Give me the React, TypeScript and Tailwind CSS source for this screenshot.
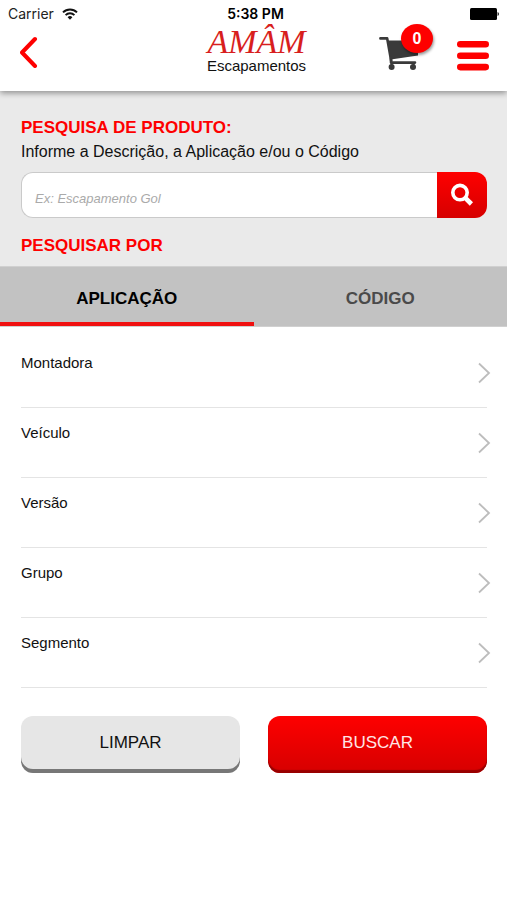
import { useState } from "react";

const TABS = ["APLICAÇÃO", "CÓDIGO"];

const FILTERS = ["Montadora", "Veículo", "Versão", "Grupo", "Segmento"];

function StatusBar() {
  return (
    <div className="grid h-7 grid-cols-3 items-center px-2 font-['Inter',sans-serif] text-sm leading-5 text-[#222]">
      <div className="flex items-center gap-2">
        <span>Carrier</span>
        <svg width="16" height="12" viewBox="0 0 16 12" fill="none" stroke="#111" strokeWidth="2">
          <path d="M1 4.4a10 10 0 0 1 14 0" />
          <path d="M3.6 7.1a6.3 6.3 0 0 1 8.8 0" />
          <path d="M8 11.8 5.6 9.2a3.4 3.4 0 0 1 4.8 0z" fill="#111" stroke="none" />
        </svg>
      </div>
      <span className="pl-1 text-center font-semibold text-black">5:38 PM</span>
      <svg className="ml-auto" width="30" height="12" viewBox="0 0 30 12" fill="#000">
        <rect x="1" width="27" height="12" rx="1.5" />
        <path d="M28.6 4a2.2 2.2 0 0 1 0 4z" />
      </svg>
    </div>
  );
}

function CartIcon() {
  return (
    <svg width="40" height="36" viewBox="0 0 40 36" fill="none">
      <path d="M1.4 2.4h6.8l4 22.6" stroke="#3a3a3a" strokeWidth="2.6" strokeLinecap="round" strokeLinejoin="round" />
      <path d="M8.6 4.6H39v14.8L11.8 23.4z" fill="#3a3a3a" />
      <path d="M12 22v4.6h24" stroke="#3a3a3a" strokeWidth="2.6" strokeLinecap="round" strokeLinejoin="round" />
      <path d="M12.6 27v4M34.6 27v4" stroke="#3a3a3a" strokeWidth="2" />
      <circle cx="12.6" cy="31" r="3" fill="#3a3a3a" />
      <circle cx="34" cy="31" r="3" fill="#3a3a3a" />
    </svg>
  );
}

function Header() {
  return (
    <header className="relative z-10 bg-white shadow-[0_2px_6px_rgba(0,0,0,0.4)]">
      <StatusBar />
      <div className="grid h-[63px] grid-cols-[1fr_auto_1fr] items-start pr-[18px] pl-5">
        <button aria-label="Voltar" className="mt-2 w-6">
          <svg width="18" height="32" viewBox="0 0 18 32" fill="none">
            <path d="M15 3 2 16.5 15 30" stroke="#fe0000" strokeWidth="4" strokeLinecap="round" strokeLinejoin="round" />
          </svg>
        </button>
        <div className="flex flex-col items-center pl-1">
          <span className="font-['Liberation_Serif',serif] text-[34px] leading-7 text-[#d81e1e] italic">AMÂM</span>
          <span className="pt-0.5 text-[15px] leading-4 text-[#111]">Escapamentos</span>
        </div>
        <div className="flex items-start justify-end gap-6">
          <button aria-label="Carrinho" className="relative mt-2 w-[54px]">
            <CartIcon />
            <span className="absolute -top-3 right-0 flex h-[29px] w-8 items-center justify-center rounded-[50%] bg-[#fe0000] text-base font-bold text-white shadow-[1px_2px_3px_rgba(0,0,0,0.4)]">
              0
            </span>
          </button>
          <button aria-label="Menu" className="mt-3">
            <svg width="32" height="31" viewBox="0 0 32 31" fill="#fe0000">
              <rect y="1" width="32" height="6.6" rx="3.3" />
              <rect y="12.4" width="32" height="6.6" rx="3.3" />
              <rect y="23.8" width="32" height="6.6" rx="3.3" />
            </svg>
          </button>
        </div>
      </div>
    </header>
  );
}

export default function App() {
  const [activeTab, setActiveTab] = useState(0);
  const [query, setQuery] = useState("");

  return (
    <div className="min-h-screen bg-white font-['Liberation_Sans',Arial,sans-serif] text-[#111]">
      <Header />

      <main>
        <section className="bg-[#eaeaea] pt-[25px] pr-5 pl-[21px]">
          <h1 className="text-[17px] leading-6 font-bold text-[#fe0000]">PESQUISA DE PRODUTO:</h1>
          <label htmlFor="search" className="block text-base leading-6">
            Informe a Descrição, a Aplicação e/ou o Código
          </label>
          <form className="mt-2 flex h-[46px]" onSubmit={(e) => e.preventDefault()}>
            <input
              id="search"
              type="text"
              value={query}
              onChange={(e) => setQuery(e.target.value)}
              placeholder="Ex: Escapamento Gol"
              className="min-w-0 flex-1 rounded-l-xl border border-r-0 border-[#cacaca] bg-white px-[13px] pt-2 text-[13px] placeholder:text-[#aaa] placeholder:italic focus:outline-none"
            />
            <button
              aria-label="Pesquisar"
              className="flex w-[50px] items-center justify-center rounded-r-xl bg-linear-to-b from-[#fe0000] to-[#d60000]"
            >
              <svg width="24" height="24" viewBox="0 0 24 24" fill="none" stroke="#fff">
                <circle cx="10" cy="9.6" r="7.2" strokeWidth="3.6" />
                <path d="m15 14.6 6.4 6.4" strokeWidth="4.6" />
              </svg>
            </button>
          </form>
          <h2 className="pt-4 pb-2 text-[17px] leading-6 font-bold text-[#fe0000]">PESQUISAR POR</h2>
        </section>

        <div role="tablist" className="grid h-[61px] grid-cols-2 border-t border-b border-t-[#d0d0d0] border-b-[#d0d0d0] bg-[#c2c2c2]">
          {TABS.map((tab, i) => (
            <button
              key={tab}
              role="tab"
              aria-selected={activeTab === i}
              onClick={() => setActiveTab(i)}
              className={`border-b-4 pt-2 text-[17px] font-bold ${activeTab === i ? "border-[#f01010] text-black" : "border-transparent text-[#4a4a4a]"}`}
            >
              {tab}
            </button>
          ))}
        </div>

        <ul className="pt-[11px] pr-5 pl-[21px]">
          {FILTERS.map((filter) => (
            <li key={filter} className="border-b border-[#e4e4e4]">
              <button className="flex h-[69px] w-full items-center justify-between text-left text-[15px] leading-5">
                <span className="pb-5">{filter}</span>
                <svg className="-mr-1" width="14" height="22" viewBox="0 0 14 22" fill="none">
                  <path d="m2 1.5 10 9.5L2 20.5" stroke="#bdbdbd" strokeWidth="1.8" />
                </svg>
              </button>
            </li>
          ))}
        </ul>

        <div className="grid grid-cols-2 gap-7 pt-7 pr-5 pb-8 pl-[21px]">
          <button className="h-[57px] rounded-xl bg-[#e6e6e6] pb-1 text-[17px] shadow-[inset_0_-4px_0_#777]">
            LIMPAR
          </button>
          <button className="h-[57px] rounded-xl bg-linear-to-b from-[#fe0000] to-[#d60000] pb-1 text-[17px] text-[#ffe6e6] shadow-[inset_0_-3px_1px_#980000]">
            BUSCAR
          </button>
        </div>
      </main>
    </div>
  );
}
